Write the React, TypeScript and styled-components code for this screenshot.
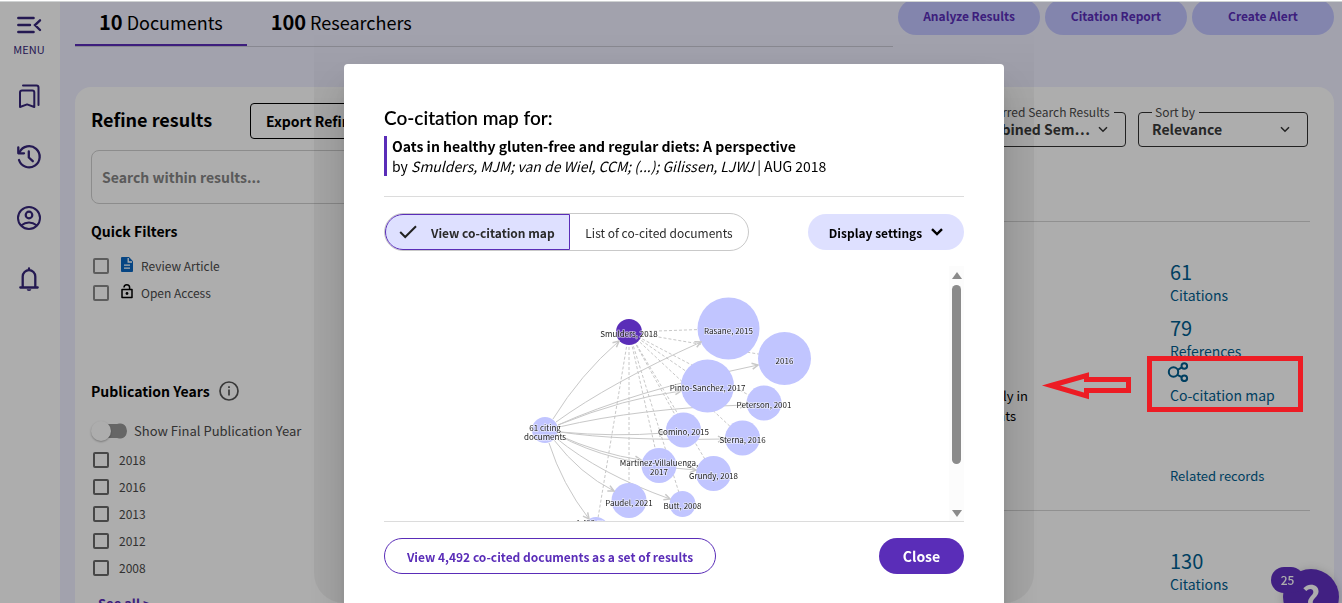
import React from "react";
import styled, { createGlobalStyle } from "styled-components";

const purple = "#5a2db8";
const lavender = "#c1c5ff";
const pale = "#dee0ff";
const link = "#005e8f";
const navIcon = "#35257a";
const sans = `"Noto Sans CJK SC", "Noto Sans", sans-serif`;

const GlobalStyle = createGlobalStyle`
  * { box-sizing: border-box; }
  body { margin: 0; overflow: hidden; background: #fff; font-family: ${sans}; color: #000; }
  button, input, select { font-family: inherit; }
  a { text-decoration: none; }
`;

const Page = styled.div`
  display: flex;
  height: 100vh;
  overflow: hidden;
  background: #efefff;
`;

const Sidebar = styled.nav`
  width: 60px;
  flex: none;
  background: #fff;
  display: flex;
  flex-direction: column;
  align-items: center;
  padding: 12px 2px 0 0;
`;

const NavButton = styled.button`
  border: 0;
  padding: 0;
  background: none;
  color: ${navIcon};
  display: flex;
  flex-direction: column;
  align-items: center;
  font-size: 11px;
  line-height: 22px;
  height: 28px;
  margin-bottom: 33px;
  svg { display: block; flex: none; fill: none; stroke: currentColor; stroke-width: 2; }
`;

const MenuButton = styled(NavButton)`
  height: 48px;
  margin-bottom: 22px;
`;

const Main = styled.main`
  flex: 1;
  min-width: 0;
  padding: 0 8px 0 15px;
  display: flex;
  flex-direction: column;
`;

const Header = styled.header`
  display: flex;
  gap: 5px;
  height: 47px;
  flex: none;
`;

const Tabs = styled.div`
  flex: 1;
  display: flex;
  border-bottom: 1px solid #c9c9d6;
`;

const Tab = styled.button<{ $active?: boolean }>`
  border: 0;
  border-bottom: 2px solid ${(p) => (p.$active ? purple : "transparent")};
  background: none;
  padding: 0 24px;
  font-size: 18px;
  line-height: 42px;
  color: #000;
  white-space: nowrap;
  b { font-size: 20px; font-weight: 600; }
`;

const Actions = styled.div`
  display: flex;
  gap: 5px;
  margin-top: -1px;
`;

const ActionButton = styled.button`
  width: 142px;
  height: 36px;
  border: 0;
  border-radius: 18px;
  background: ${lavender};
  color: ${purple};
  padding: 0 0 3px;
  font-size: 12px;
  font-weight: 600;
`;

const Panel = styled.section`
  margin-top: 40px;
  flex: 1;
  min-height: 0;
  display: flex;
  gap: 24px;
  background: #fff;
  border-radius: 16px 16px 0 0;
  padding: 16px 24px 0 16px;
`;

const Refine = styled.aside`
  width: 300px;
  flex: none;
  display: flex;
  flex-direction: column;
`;

const RefineHead = styled.div`
  display: flex;
  justify-content: space-between;
  align-items: flex-start;
  height: 36px;
  flex: none;
`;

const RefineTitle = styled.h2`
  margin: 0;
  font-size: 18px;
  line-height: 32px;
  font-weight: 600;
`;

const ExportButton = styled.button`
  width: 141px;
  height: 36px;
  border: 1px solid #000;
  border-radius: 4px;
  background: #fff;
  font-size: 14px;
  font-weight: 600;
  padding: 0 15px;
  text-align: left;
  white-space: nowrap;
  color: #000;
`;

const SearchInput = styled.input`
  flex: none;
  height: 54px;
  margin-top: 11px;
  border: 1px solid #cfcfcf;
  border-radius: 8px;
  padding: 0 10px;
  font-size: 14px;
  font-weight: 600;
  background: #fff;
  &::placeholder { color: #858585; opacity: 1; }
`;

const FilterTitle = styled.h3<{ $top: number }>`
  margin: ${(p) => p.$top}px 0 9px;
  display: flex;
  align-items: center;
  gap: 9px;
  height: 24px;
  flex: none;
  font-size: 14px;
  line-height: 24px;
  font-weight: 600;
`;

const CheckRow = styled.label`
  display: flex;
  align-items: center;
  height: 27px;
  flex: none;
  padding-left: 2px;
  font-size: 12px;
  color: #4a4a4a;
  svg { margin: 0 8px 3px 0; flex: none; }
`;

const CheckBox = styled.input<{ $soft?: boolean }>`
  appearance: none;
  width: 16px;
  height: 16px;
  margin: 0 ${(p) => (p.$soft ? 12 : 10)}px 0 0;
  border: 2px solid ${(p) => (p.$soft ? "#8a8a8a" : "#696969")};
  border-radius: 2px;
`;

const ToggleRow = styled.label`
  display: flex;
  align-items: center;
  height: 27px;
  margin: 5px 0 2px;
  flex: none;
  gap: 7px;
  font-size: 13px;
  color: #4a4a4a;
`;

const Switch = styled.input`
  appearance: none;
  width: 36px;
  height: 20px;
  margin: 0;
  border-radius: 10px;
  background: linear-gradient(#979797, #979797) 6px 3px / 23px 14px no-repeat,
    radial-gradient(circle at 29px 10px, #979797 7px, transparent 8px);
  display: flex;
  &::before {
    content: "";
    width: 20px;
    height: 20px;
    border-radius: 50%;
    background: #fff;
    box-shadow: 0 1px 2px rgba(0, 0, 0, 0.3);
  }
`;

const SeeAll = styled.a`
  margin: 11px 0 0 7px;
  font-size: 13px;
  line-height: 24px;
  font-weight: 600;
  color: ${purple};
`;

const Results = styled.div`
  flex: 1;
  min-width: 0;
  display: flex;
  flex-direction: column;
`;

const SortBar = styled.div`
  display: flex;
  justify-content: flex-end;
  gap: 12px;
  height: 44px;
  flex: none;
  padding-right: 2px;
`;

const SelectField = styled.fieldset`
  width: 170px;
  height: 44px;
  margin: 0;
  border: 1px solid #333;
  border-radius: 4px;
  padding: 0 17px 0 13px;
  min-width: 0;
`;

const SelectLabel = styled.legend`
  padding: 0 4px 0 3px;
  font-size: 12px;
  line-height: 18px;
  color: #4a4a4a;
  white-space: nowrap;
`;

const SelectLine = styled.div`
  display: flex;
  align-items: center;
  height: 16px;
`;

const Select = styled.select`
  appearance: none;
  flex: 1;
  min-width: 0;
  border: 0;
  padding: 0;
  background: none;
  font-size: 14px;
  line-height: 16px;
  font-weight: 600;
  color: #3a3a3a;
  text-overflow: ellipsis;
`;

const Record = styled.article`
  display: flex;
  justify-content: flex-end;
  gap: 142px;
  height: 289px;
  flex: none;
  border-top: 1px solid #d5d5d5;
`;

const FirstRecord = styled(Record)`
  margin-top: 74px;
`;

const Abstract = styled.p`
  margin: 0;
  padding-top: 164px;
  font-size: 13px;
  line-height: 20px;
  text-align: right;
`;

const AbstractLine = styled.span<{ $inset?: number }>`
  display: block;
  padding-right: ${(p) => p.$inset ?? 0}px;
`;

const Stats = styled.div`
  width: 140px;
  padding-top: 36px;
  display: flex;
  flex-direction: column;
  align-items: flex-start;
`;

const Stat = styled.a`
  display: flex;
  flex-direction: column;
  margin-bottom: 8px;
  color: ${link};
  font-size: 14px;
  line-height: 20px;
`;

const StatNumber = styled.span`
  font-size: 20px;
  line-height: 28px;
`;

const StatLabel = styled.span`
  margin-top: -1px;
  padding-bottom: 1px;
`;

const MapLink = styled(Stat)`
  margin: -8px 0 60px;
  gap: 4px;
  svg { margin-left: -3px; display: block; }
`;

const RelatedLink = styled.a`
  font-size: 13px;
  line-height: 20px;
  color: ${link};
`;

const Help = styled.button`
  position: fixed;
  right: 3px;
  bottom: -22px;
  width: 56px;
  height: 56px;
  border: 0;
  border-radius: 50%;
  background: #6030c0;
  color: #fff;
  box-shadow: 0 1px 10px rgba(0, 0, 0, 0.2);
  font-size: 36px;
  line-height: 56px;
  font-weight: 700;
  padding: 0;
`;

const HelpBadge = styled.span`
  position: absolute;
  left: -12px;
  top: -2px;
  width: 33px;
  height: 26px;
  border-radius: 13px;
  background: #6030c0;
  font-size: 12px;
  font-weight: 500;
  line-height: 26px;
`;

const Overlay = styled.div`
  position: fixed;
  inset: 0;
  display: flex;
  justify-content: center;
  padding-left: 6px;
  background: rgba(0, 0, 0, 0.32);
`;

const Halo = styled.div`
  width: 720px;
  height: 100%;
  padding: 64px 30px 0;
  border-radius: 0 0 30px 30px;
  background: linear-gradient(transparent 30px, rgba(0, 0, 0, 0.05) 110px);
`;

const Dialog = styled.section`
  background: #fff;
  border-radius: 4px;
  padding: 42px 40px 60px;
  box-shadow: 0 11px 15px -7px rgba(0, 0, 0, 0.2), 0 24px 38px 3px rgba(0, 0, 0, 0.14);
`;

const DialogTitle = styled.h1`
  margin: 0 0 6px;
  font-family: Lato, sans-serif;
  font-size: 19px;
  line-height: 24px;
  font-weight: 600;
`;

const Citation = styled.div`
  border-left: 3px solid ${purple};
  padding-left: 5px;
  font-size: 14px;
  line-height: 20px;
  white-space: nowrap;
`;

const Rule = styled.hr<{ $top: number }>`
  margin: ${(p) => p.$top}px 0 16px;
  border: 0;
  height: 1px;
  background: #dcdcdc;
`;

const Toolbar = styled.div`
  display: flex;
  align-items: center;
  justify-content: space-between;
  height: 38px;
`;

const Segments = styled.div`
  display: flex;
  height: 38px;
  width: 365px;
  border: 1px solid #c9c9c9;
  border-radius: 19px;
`;

const Segment = styled.button<{ $selected?: boolean }>`
  display: flex;
  align-items: center;
  justify-content: ${(p) => (p.$selected ? "flex-start" : "center")};
  gap: 14px;
  flex: ${(p) => (p.$selected ? "0 0 185px" : "1")};
  border: ${(p) => (p.$selected ? `1px solid ${purple}` : "0")};
  border-radius: ${(p) => (p.$selected ? "18px 0 0 18px" : "0 18px 18px 0")};
  background: ${(p) => (p.$selected ? pale : "transparent")};
  font-size: 12px;
  font-weight: ${(p) => (p.$selected ? 600 : 400)};
  color: #2a2a2a;
  padding: 0 0 0 ${(p) => (p.$selected ? 13 : 0)}px;
  white-space: nowrap;
`;

const SettingsButton = styled.button`
  width: 156px;
  height: 36px;
  border: 0;
  border-radius: 18px;
  background: ${pale};
  display: flex;
  align-items: center;
  justify-content: center;
  gap: 9px;
  padding: 0;
  font-size: 12px;
  font-weight: 600;
  color: #000;
`;

const MapArea = styled.div`
  display: flex;
  height: 255px;
  margin-top: 15px;
  > svg { display: block; flex: 1; min-width: 0; font-family: ${sans}; }
`;

const ScrollTrack = styled.div`
  width: 15px;
  background: #fcfcfc;
  display: flex;
  flex-direction: column;
  align-items: center;
  padding: 6px 0 4px;
  svg { fill: #8b8b8b; display: block; }
`;

const ScrollThumb = styled.div`
  width: 9px;
  height: 179px;
  margin: 6px 0 auto;
  border-radius: 5px;
  background: #8b8b8b;
`;

const Footer = styled.footer`
  display: flex;
  justify-content: space-between;
`;

const OutlineButton = styled.button`
  width: 332px;
  height: 36px;
  border: 1px solid ${purple};
  border-radius: 18px;
  background: #fff;
  color: ${purple};
  font-size: 12px;
  font-weight: 600;
  padding: 0;
  white-space: nowrap;
`;

const CloseButton = styled.button`
  width: 85px;
  height: 36px;
  border: 0;
  border-radius: 18px;
  background: ${purple};
  color: #fff;
  font-size: 14px;
  font-weight: 600;
  padding: 0;
`;

const Annotation = styled.svg`
  position: fixed;
  top: 350px;
  right: 32px;
  pointer-events: none;
`;

const WindowEdge = styled.div`
  position: fixed;
  inset: 0 0 auto;
  height: 2px;
  background: #fff;
  border-bottom: 1px solid #cfd2d2;
`;

type Node = { x: number; y: number; r: number; label: string[]; main?: boolean };

const nodes: Node[] = [
  { x: 629, y: 332, r: 13, label: ["Smulders, 2018"], main: true },
  { x: 728.5, y: 328.5, r: 31, label: ["Rasane, 2015"] },
  { x: 784.5, y: 358.5, r: 26.5, label: ["2016"] },
  { x: 707.5, y: 386, r: 26.5, label: ["Pinto-Sanchez, 2017"] },
  { x: 764, y: 403, r: 17.5, label: ["Peterson, 2001"] },
  { x: 683.5, y: 430, r: 17.5, label: ["Comino, 2015"] },
  { x: 742.5, y: 438, r: 17.5, label: ["Sterna, 2016"] },
  { x: 659, y: 465.5, r: 17.5, label: ["Martinez-Villaluenga,", "2017"] },
  { x: 713.5, y: 473.5, r: 17.5, label: ["Grundy, 2018"] },
  { x: 629, y: 500.5, r: 17.5, label: ["Paudel, 2021"] },
  { x: 682.5, y: 504, r: 13, label: ["Butt, 2008"] },
  { x: 596, y: 530, r: 13, label: ["4,492 more", "co-cited", "documents"] },
  { x: 545, y: 430, r: 13, label: ["61 citing", "documents"] },
];

const citingEdges = [
  "M553 419Q580 375 619 341",
  "M556 422Q610 383 701 342",
  "M558 425Q630 392 758 365",
  "M558 425Q625 398 681 391",
  "M559 427Q640 408 746 405",
  "M560 432Q615 437 665 433",
  "M560 432Q620 441 724 439",
  "M558 435Q600 454 641 460",
  "M558 435Q610 464 696 470",
  "M556 438Q600 474 670 499",
  "M554 440Q580 474 614 491",
  "M549 443Q562 484 589 519",
];

const CoCitationMap = () => (
  <svg viewBox="384 266 565 255" role="img" aria-label="Co-citation map">
    <defs>
      <marker id="arrow" viewBox="0 0 8 8" refX="7" refY="4" markerWidth="8" markerHeight="8" markerUnits="userSpaceOnUse" orient="auto">
        <path d="M1 1L7 4L1 7" fill="none" stroke="#c8c8c8" strokeWidth="1.5" />
      </marker>
    </defs>
    <g stroke="#c8c8c8" fill="none">
      {nodes.slice(1, 12).map((n) => (
        <path key={n.label[0]} d={`M629 332L${n.x} ${n.y}`} strokeDasharray="3 2" />
      ))}
      {citingEdges.map((d) => (
        <path key={d} d={d} />
      ))}
    </g>
    {nodes.map((n) => (
      <circle key={n.label[0]} cx={n.x} cy={n.y} r={n.r} fill={n.main ? purple : lavender} />
    ))}
    <g stroke="none" fill="none">
      {citingEdges.map((d) => (
        <path key={d} d={d} markerEnd="url(#arrow)" />
      ))}
    </g>
    <g fontSize="8" textAnchor="middle" fill="#222" stroke="#fff" strokeOpacity="0.6" strokeWidth="1.5" paintOrder="stroke">
      {nodes.map((n) =>
        n.label.map((line, i) => (
          <text key={line + n.x} x={n.x} y={n.y + 5 + (i - (n.label.length - 1) / 2) * 9}>
            {line}
          </text>
        ))
      )}
    </g>
  </svg>
);

const Chevron = () => (
  <svg width="10" height="7" viewBox="0 0 10 7" fill="none" stroke="#333" strokeWidth="1.5">
    <path d="M1 1.2L5 5.2L9 1.2" />
  </svg>
);

const years = ["2018", "2016", "2013", "2012", "2008"];

export default function App() {
  return (
    <>
      <GlobalStyle />
      <Page>
        <Sidebar>
          <MenuButton>
            <svg width="28" height="26" viewBox="15 12 28 26" strokeLinecap="round">
              <path d="M18.3 18H33.6M18.3 25H30M18.3 32H33.6M40 20.3L35 25.1L40 30" strokeWidth="2.4" />
            </svg>
            MENU
          </MenuButton>
          <NavButton aria-label="Marked list">
            <svg width="28" height="28" viewBox="15 82 28 28" strokeLinejoin="round" strokeLinecap="round">
              <path d="M23 85.5H36.5Q38.5 85.5 38.5 87.5V105" />
              <path d="M20 107V92.5Q20 90.5 22 90.5H32.3Q34.3 90.5 34.3 92.5V107L27.1 104.4Z" />
            </svg>
          </NavButton>
          <NavButton aria-label="History">
            <svg width="28" height="28" viewBox="15 143 28 28" strokeLinecap="round" strokeLinejoin="round">
              <path d="M19.6 152A10.6 10.6 0 1 1 19 160" strokeWidth="2.3" />
              <path d="M18.3 147.5V153.3H24M28.8 151.5V157.5L32.8 161.2" strokeWidth="2.3" />
            </svg>
          </NavButton>
          <NavButton aria-label="Account">
            <svg width="28" height="28" viewBox="15 204 28 28">
              <circle cx="29" cy="218" r="11" />
              <circle cx="29" cy="215" r="3.3" strokeWidth="2.2" />
              <path d="M21 225.5Q29 219.5 37 225.5" />
            </svg>
          </NavButton>
          <NavButton aria-label="Alerts">
            <svg width="28" height="28" viewBox="15 265 28 28" strokeLinecap="round">
              <path d="M20.3 287.5H37.7M22.7 287V276.5A6.3 6.3 0 0 1 35.3 276.5V287M29 270V268.5" strokeWidth="2.3" />
              <path d="M26.7 289.2A2.3 1.8 0 0 0 31.3 289.2Z" fill="currentColor" stroke="none" />
            </svg>
          </NavButton>
        </Sidebar>
        <Main>
          <Header>
            <Tabs role="tablist">
              <Tab role="tab" $active><b>10</b> Documents</Tab>
              <Tab role="tab"><b>100</b> Researchers</Tab>
            </Tabs>
            <Actions>
              <ActionButton>Analyze Results</ActionButton>
              <ActionButton>Citation Report</ActionButton>
              <ActionButton>Create Alert</ActionButton>
            </Actions>
          </Header>
          <Panel>
            <Refine>
              <RefineHead>
                <RefineTitle>Refine results</RefineTitle>
                <ExportButton>Export Refine</ExportButton>
              </RefineHead>
              <SearchInput aria-label="Search within results" placeholder="Search within results..." />
              <FilterTitle $top={15}>Quick Filters</FilterTitle>
              <CheckRow>
                <CheckBox type="checkbox" $soft />
                <svg width="12" height="15" viewBox="0 0 12 15">
                  <path d="M1 0H8L12 4.2V14Q12 15 11 15H1Q0 15 0 14V1Q0 0 1 0Z" fill="#0a66c2" />
                  <path d="M7.2 1V5H11M3 8.2H9M3 11.2H9" fill="none" stroke="#fff" strokeWidth="1.3" />
                </svg>
                Review Article
              </CheckRow>
              <CheckRow>
                <CheckBox type="checkbox" $soft />
                <svg width="12" height="15" viewBox="0 0 12 15">
                  <path d="M3 3.6A2.8 2.8 0 0 1 8.6 3.6V5M1 5.6H11V13.6H1Z" fill="none" stroke="#000" strokeWidth="1.5" strokeLinejoin="round" />
                  <circle cx="6" cy="9.5" r="1.4" />
                </svg>
                Open Access
              </CheckRow>
              <FilterTitle $top={73}>
                Publication Years
                <svg width="20" height="20" viewBox="0 0 20 20" fill="none" stroke="#555" strokeWidth="1.7">
                  <circle cx="10" cy="10" r="9" />
                  <path d="M10 8.6V14.5M10 5.2V7" />
                </svg>
              </FilterTitle>
              <ToggleRow>
                <Switch type="checkbox" role="switch" />
                Show Final Publication Year
              </ToggleRow>
              {years.map((y) => (
                <CheckRow key={y}>
                  <CheckBox type="checkbox" />
                  {y}
                </CheckRow>
              ))}
              <SeeAll href="#years">See all &gt;</SeeAll>
            </Refine>
            <Results>
              <SortBar>
                <SelectField>
                  <SelectLabel id="pref">Preferred Search Results</SelectLabel>
                  <SelectLine>
                    <Select aria-labelledby="pref">
                      <option>Combined Sem…</option>
                    </Select>
                    <Chevron />
                  </SelectLine>
                </SelectField>
                <SelectField>
                  <SelectLabel id="sort">Sort by</SelectLabel>
                  <SelectLine>
                    <Select aria-labelledby="sort">
                      <option>Relevance</option>
                    </Select>
                    <Chevron />
                  </SelectLine>
                </SelectField>
              </SortBar>
              <FirstRecord>
                <Abstract>
                  <AbstractLine>increasingly in</AbstractLine>
                  <AbstractLine $inset={12}>patients</AbstractLine>
                </Abstract>
                <Stats>
                  <Stat href="#citations"><StatNumber>61</StatNumber><StatLabel>Citations</StatLabel></Stat>
                  <Stat href="#references"><StatNumber>79</StatNumber><StatLabel>References</StatLabel></Stat>
                  <MapLink href="#map">
                    <svg width="22" height="20" viewBox="0 0 22 20" fill="none" stroke="currentColor" strokeWidth="2">
                      <circle cx="6.5" cy="10" r="4.7" />
                      <circle cx="17.3" cy="4" r="2.8" />
                      <circle cx="17.3" cy="16.3" r="2.8" />
                      <path d="M10.7 7.8L14.8 5.4M10.3 12.8L14.8 15.2" />
                    </svg>
                    <StatLabel>Co-citation map</StatLabel>
                  </MapLink>
                  <RelatedLink href="#related">Related records</RelatedLink>
                </Stats>
              </FirstRecord>
              <Record>
                <Stats>
                  <Stat href="#citations2"><StatNumber>130</StatNumber><StatLabel>Citations</StatLabel></Stat>
                </Stats>
              </Record>
            </Results>
          </Panel>
        </Main>
      </Page>
      <Help aria-label="Help">
        <HelpBadge>25</HelpBadge>?
      </Help>
      <Overlay>
        <Halo>
          <Dialog role="dialog" aria-labelledby="dialog-title">
            <DialogTitle id="dialog-title">Co-citation map for:</DialogTitle>
            <Citation>
              <b>Oats in healthy gluten-free and regular diets: A perspective</b>
              <br />
              by <i>Smulders, MJM; van de Wiel, CCM; (...); Gilissen, LJWJ</i> | AUG 2018
            </Citation>
            <Rule $top={20} />
            <Toolbar>
              <Segments>
                <Segment $selected>
                  <svg width="18" height="14" viewBox="0 0 18 14" fill="none" stroke="#222" strokeWidth="2">
                    <path d="M1.2 7L6.2 12L17 1.2" />
                  </svg>
                  View co-citation map
                </Segment>
                <Segment>List of co-cited documents</Segment>
              </Segments>
              <SettingsButton>
                Display settings
                <svg width="12" height="8" viewBox="0 0 12 8" fill="none" stroke="#000" strokeWidth="2.4">
                  <path d="M1 1.2L6 6L11 1.2" />
                </svg>
              </SettingsButton>
            </Toolbar>
            <MapArea>
              <CoCitationMap />
              <ScrollTrack>
                <svg width="10" height="7" viewBox="0 0 10 7"><path d="M5 0L10 7H0Z" /></svg>
                <ScrollThumb />
                <svg width="10" height="7" viewBox="0 0 10 7"><path d="M0 0H10L5 7Z" /></svg>
              </ScrollTrack>
            </MapArea>
            <Rule $top={0} />
            <Footer>
              <OutlineButton>View 4,492 co-cited documents as a set of results</OutlineButton>
              <CloseButton>Close</CloseButton>
            </Footer>
          </Dialog>
        </Halo>
      </Overlay>
      <Annotation width="270" height="66" viewBox="1040 350 270 66" fill="none" stroke="#ed1c24">
        <rect x="1149.5" y="358.5" width="151" height="51" strokeWidth="5" />
        <path d="M1051 385.5L1086.5 375.5V379.5H1128.5V390.5H1086.5V396Z" strokeWidth="5" strokeMiterlimit="10" />
      </Annotation>
      <WindowEdge />
    </>
  );
}
